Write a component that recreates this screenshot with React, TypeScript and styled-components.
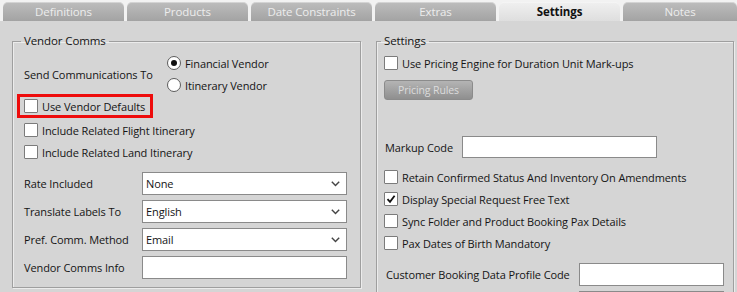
import React from "react";
import styled, { createGlobalStyle, css } from "styled-components";

const GlobalStyle = createGlobalStyle`
  html, body {
    margin: 0;
    padding: 0;
    background: #d5d5d5;
    font-family: "Open Sans", "Noto Sans", sans-serif;
    font-size: 11px;
    letter-spacing: -0.1px;
    color: #141414;
  }
`;

const Page = styled.div`
  width: 737px;
  height: 292px;
  overflow: hidden;
  background: #d5d5d5;
`;

const TabBar = styled.div`
  display: flex;
  gap: 3px;
  padding: 2px 0 0 3px;
  height: 19px;
  background: #f2f2f2;
`;

const Tab = styled.div<{ $active?: boolean; $last?: boolean }>`
  width: 121px;
  flex: ${(p) => (p.$last ? "1" : "none")};
  height: 19px;
  display: flex;
  align-items: center;
  justify-content: center;
  border-radius: 5px 5px 0 0;
  font-size: 11.5px;
  color: #ededed;
  background: linear-gradient(#bdbdbd, #a3a3a3);
  box-shadow: inset 0 1px 0 rgba(255, 255, 255, 0.35);
  ${(p) =>
    p.$active &&
    css`
      background: linear-gradient(#f0f0f0, #dedede);
      color: #111;
      font-weight: 700;
    `}
`;

const Body = styled.div`
  display: grid;
  grid-template-columns: 349px 358px;
  gap: 15px;
  padding: 13px 0 0 12px;
  align-items: start;
`;

const Group = styled.fieldset<{ $padLeft: number }>`
  margin: 0;
  padding: 4px 8px 8px ${(p) => p.$padLeft}px;
  border: 1px solid #9f9f9f;
  box-shadow: 1px 1px 0 #ececec, inset 1px 1px 0 #ececec;
  min-width: 0;
`;

const Legend = styled.legend`
  padding: 0 3px;
  margin-left: -3px;
  font-size: 11.5px;
  line-height: 14px;
`;

const SendRow = styled.div`
  display: flex;
  align-items: center;
`;

const SendLabel = styled.div`
  width: 143px;
  white-space: nowrap;
`;

const RadioList = styled.div`
  display: flex;
  flex-direction: column;
`;

const OptionRow = styled.label<{ $h?: number }>`
  display: flex;
  align-items: center;
  height: ${(p) => p.$h ?? 22}px;
  gap: 4px;
  white-space: nowrap;
`;

const RadioCircle = styled.span<{ $on?: boolean }>`
  width: 12px;
  height: 12px;
  border-radius: 50%;
  border: 1px solid #5c5c5c;
  background: #fff;
  display: flex;
  align-items: center;
  justify-content: center;
  &::after {
    content: "";
    width: 6px;
    height: 6px;
    border-radius: 50%;
    background: ${(p) => (p.$on ? "#111" : "transparent")};
  }
`;

const Box = styled.span`
  width: 12px;
  height: 12px;
  border: 1px solid #7b7b7b;
  border-radius: 1px;
  background: #fff;
  display: flex;
  align-items: center;
  justify-content: center;
  flex: none;
`;

const Highlight = styled.div`
  width: fit-content;
  margin: -2px 0 1px -7px;
  padding: 0 5px 0 4px;
  border: 3px solid #ee0c0c;
`;

const FieldList = styled.div`
  display: flex;
  flex-direction: column;
  gap: 5px;
  margin-top: 9px;
`;

const FieldRow = styled.div<{ $labelW: number }>`
  display: grid;
  grid-template-columns: ${(p) => p.$labelW}px auto;
  align-items: center;
  white-space: nowrap;
`;

const Select = styled.div`
  width: 205px;
  height: 23px;
  box-sizing: border-box;
  border: 1px solid #8a8a8a;
  background: #fff;
  display: flex;
  align-items: center;
  justify-content: space-between;
  padding: 0 6px 0 3px;
`;

const TextBox = styled.div<{ $w: number; $h?: number }>`
  width: ${(p) => p.$w}px;
  height: ${(p) => p.$h ?? 23}px;
  box-sizing: border-box;
  border: 1px solid #8a8a8a;
  background: #fff;
  flex: none;
`;

const Button = styled.div`
  width: 89px;
  height: 20px;
  margin-top: 6px;
  box-sizing: border-box;
  border: 1px solid #8b8b8b;
  border-radius: 3px;
  background: linear-gradient(#b4b4b4, #8f8f8f);
  color: #dcdcdc;
  font-size: 10.5px;
  display: flex;
  align-items: center;
  justify-content: center;
`;

const MarkupRow = styled.div`
  display: flex;
  align-items: center;
  gap: 9px;
  margin-top: 36px;
  padding-left: 1px;
`;

const CheckList = styled.div`
  margin-top: 8px;
`;

const ProfileRow = styled.div`
  display: flex;
  align-items: center;
  gap: 9px;
  margin-top: 9px;
  padding-left: 2px;
  white-space: nowrap;
`;

const Extra = styled.div`
  margin: 5px 0 0 195px;
`;

const Check: React.FC<{ checked?: boolean; label: string; h?: number }> = ({
  checked,
  label,
  h,
}) => (
  <OptionRow $h={h}>
    <Box>
      {checked && (
        <svg width="10" height="10" viewBox="0 0 10 10">
          <path d="M1.5 5.2 L4 7.8 L8.6 1.8" fill="none" stroke="#111" strokeWidth="1.8" />
        </svg>
      )}
    </Box>
    {label}
  </OptionRow>
);

const Chevron = () => (
  <svg width="9" height="6" viewBox="0 0 9 6">
    <path d="M0.8 0.8 L4.5 4.6 L8.2 0.8" fill="none" stroke="#444" strokeWidth="1.4" />
  </svg>
);

const tabs = ["Definitions", "Products", "Date Constraints", "Extras", "Settings", "Notes"];

const selects = [
  ["Rate Included", "None"],
  ["Translate Labels To", "English"],
  ["Pref. Comm. Method", "Email"],
];

export default function App() {
  return (
    <Page>
      <GlobalStyle />
      <TabBar>
        {tabs.map((t, i) => (
          <Tab key={t} $active={t === "Settings"} $last={i === tabs.length - 1}>
            {t}
          </Tab>
        ))}
      </TabBar>
      <Body>
        <Group $padLeft={11}>
          <Legend>Vendor Comms</Legend>
          <SendRow>
            <SendLabel>Send Communications To</SendLabel>
            <RadioList>
              <OptionRow>
                <RadioCircle $on />
                Financial Vendor
              </OptionRow>
              <OptionRow>
                <RadioCircle />
                Itinerary Vendor
              </OptionRow>
            </RadioList>
          </SendRow>
          <Highlight>
            <Check label="Use Vendor Defaults" h={18} />
          </Highlight>
          <Check label="Include Related Flight Itinerary" />
          <Check label="Include Related Land Itinerary" />
          <FieldList>
            {selects.map(([label, value]) => (
              <FieldRow key={label} $labelW={118}>
                {label}
                <Select>
                  {value}
                  <Chevron />
                </Select>
              </FieldRow>
            ))}
            <FieldRow $labelW={118}>
              Vendor Comms Info
              <TextBox $w={205} />
            </FieldRow>
          </FieldList>
        </Group>
        <Group $padLeft={7}>
          <Legend>Settings</Legend>
          <Check label="Use Pricing Engine for Duration Unit Mark-ups" />
          <Button>Pricing Rules</Button>
          <MarkupRow>
            Markup Code
            <TextBox $w={195} $h={22} />
          </MarkupRow>
          <CheckList>
            <Check label="Retain Confirmed Status And Inventory On Amendments" />
            <Check checked label="Display Special Request Free Text" />
            <Check label="Sync Folder and Product Booking Pax Details" />
            <Check label="Pax Dates of Birth Mandatory" />
          </CheckList>
          <ProfileRow>
            Customer Booking Data Profile Code
            <TextBox $w={145} />
          </ProfileRow>
          <Extra>
            <TextBox $w={145} />
          </Extra>
        </Group>
      </Body>
    </Page>
  );
}
